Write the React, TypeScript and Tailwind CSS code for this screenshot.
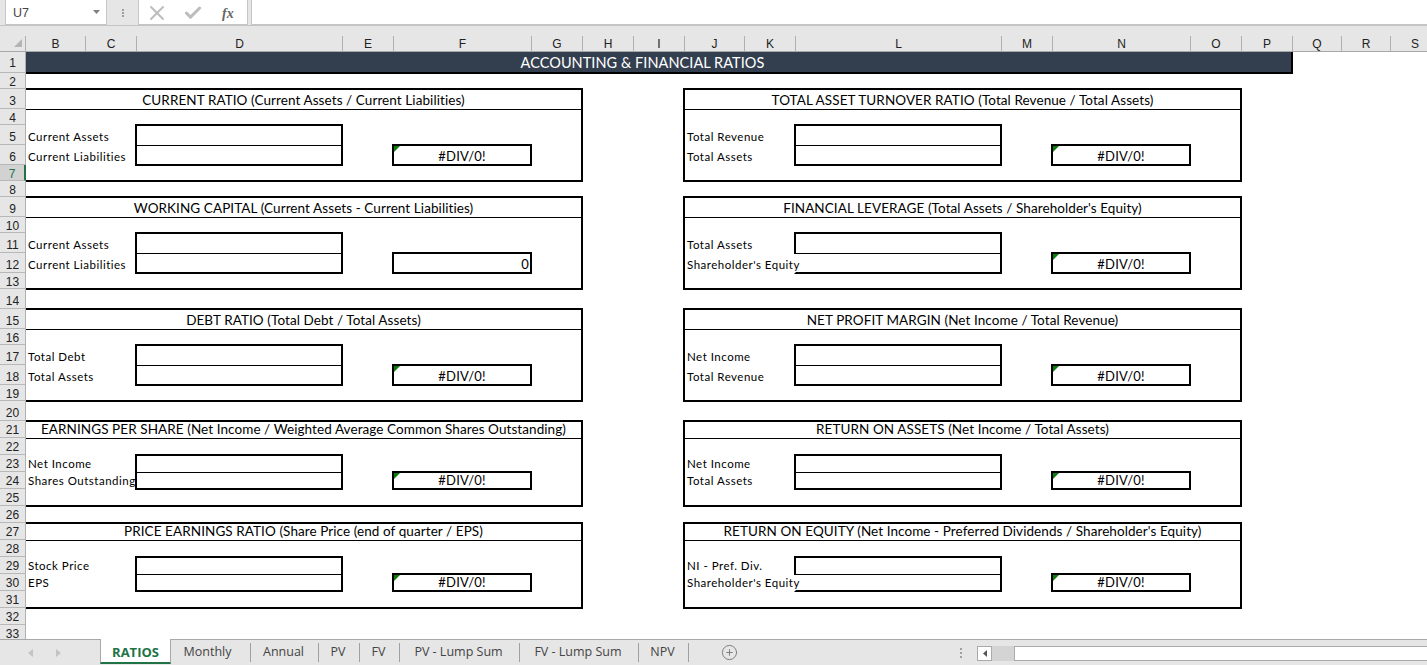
import React from "react";
import { X, Check, CirclePlus } from "lucide-react";

const columns = [
  { l: "B", w: "w-[60px]" }, { l: "C", w: "w-[51px]" }, { l: "D", w: "w-[206px]" }, { l: "E", w: "w-[51px]" },
  { l: "F", w: "w-[138px]" }, { l: "G", w: "w-[51px]" }, { l: "H", w: "w-[51px]" }, { l: "I", w: "w-[51px]" },
  { l: "J", w: "w-[60px]" }, { l: "K", w: "w-[51px]" }, { l: "L", w: "w-[206px]" }, { l: "M", w: "w-[51px]" },
  { l: "N", w: "w-[138px]" }, { l: "O", w: "w-[51px]" }, { l: "P", w: "w-[51px]" }, { l: "Q", w: "w-[49px]" },
  { l: "R", w: "w-[49px]" }, { l: "S", w: "w-[49px]" },
];

const rowHeights = [
  "h-[21px] pt-[2px]", "h-[16px] pt-[2px]", "h-[20px] pt-[4px]", "h-[16px] pt-[2px]", "h-[20px] pt-[4px]", "h-[20px] pt-[4px]", "h-[16px] pt-[2px]", "h-[16px] pt-[2px]", "h-[20px] pt-[4px]", "h-[16px] pt-[2px]", "h-[20px] pt-[4px]",
  "h-[20px] pt-[4px]", "h-[16px] pt-[2px]", "h-[20px] pt-[4px]", "h-[20px] pt-[4px]", "h-[16px] pt-[2px]", "h-[20px] pt-[4px]", "h-[20px] pt-[4px]", "h-[16px] pt-[2px]", "h-[20px] pt-[4px]", "h-[17px] pt-[1px]", "h-[17px] pt-[1px]",
  "h-[17px] pt-[1px]", "h-[17px] pt-[1px]", "h-[17px] pt-[1px]", "h-[17px] pt-[1px]", "h-[17px] pt-[1px]", "h-[17px] pt-[1px]", "h-[17px] pt-[1px]", "h-[17px] pt-[1px]", "h-[17px] pt-[1px]", "h-[17px] pt-[1px]", "h-[17px] pt-[1px]",
];

type Card = { title: string; a: string; b: string; value: string; top: string; small?: boolean; spill?: boolean };

const left: Card[] = [
  { title: "CURRENT RATIO (Current Assets / Current Liabilities)", a: "Current Assets", b: "Current Liabilities", value: "#DIV/0!", top: "mt-[14px]" },
  { title: "WORKING CAPITAL (Current Assets - Current Liabilities)", a: "Current Assets", b: "Current Liabilities", value: "0", top: "mt-[14px]" },
  { title: "DEBT RATIO (Total Debt / Total Assets)", a: "Total Debt", b: "Total Assets", value: "#DIV/0!", top: "mt-[18px]" },
  { title: "EARNINGS PER SHARE (Net Income / Weighted Average Common Shares Outstanding)", a: "Net Income", b: "Shares Outstanding", value: "#DIV/0!", top: "mt-[18px]", small: true },
  { title: "PRICE EARNINGS RATIO (Share Price (end of quarter / EPS)", a: "Stock Price", b: "EPS", value: "#DIV/0!", top: "mt-[15px]", small: true },
];

const right: Card[] = [
  { title: "TOTAL ASSET TURNOVER RATIO (Total Revenue / Total Assets)", a: "Total Revenue", b: "Total Assets", value: "#DIV/0!", top: "mt-[14px]" },
  { title: "FINANCIAL LEVERAGE (Total Assets / Shareholder's Equity)", a: "Total Assets", b: "Shareholder's Equity", value: "#DIV/0!", top: "mt-[14px]", spill: true },
  { title: "NET PROFIT MARGIN (Net Income / Total Revenue)", a: "Net Income", b: "Total Revenue", value: "#DIV/0!", top: "mt-[18px]" },
  { title: "RETURN ON ASSETS (Net Income / Total Assets)", a: "Net Income", b: "Total Assets", value: "#DIV/0!", top: "mt-[18px]", small: true },
  { title: "RETURN ON EQUITY (Net Income - Preferred Dividends / Shareholder's Equity)", a: "NI - Pref. Div.", b: "Shareholder's Equity", value: "#DIV/0!", top: "mt-[15px]", small: true, spill: true },
];

const tabs = [
  { t: "Monthly", w: "w-[80px]", p: "pr-[6px]" }, { t: "Annual", w: "w-[68px]", p: "pr-[2px]" }, { t: "PV", w: "w-[41px]", p: "pr-[2px]" }, { t: "FV", w: "w-[40px]", p: "pr-[2px]" },
  { t: "PV - Lump Sum", w: "w-[120px]", p: "pr-[2px]" }, { t: "FV - Lump Sum", w: "w-[119px]", p: "pr-[2px]" }, { t: "NPV", w: "w-[50px]", p: "pr-[2px]" },
];

function RatioCard({ card, noLeft }: { card: Card; noLeft?: boolean }) {
  const s = card.small;
  return (
    <div className={`${card.top} ${s ? "h-[87px]" : "h-[94px]"} w-full border-2 border-black ${noLeft ? "border-l-0" : ""} bg-white flex flex-col`}>
      <div className={`${s ? "h-[17px] pb-[1px]" : "h-[20px] pt-[1px]"} shrink-0 border-b border-black flex items-center justify-center text-[13.5px] tracking-[0.08px] text-black whitespace-nowrap`}>
        {card.title}
      </div>
      <div className={`flex items-start pl-[2px] ${s ? "pt-[15px]" : "pt-[14px]"}`}>
        <div className="w-[107px] shrink-0 relative z-10 text-[11.5px] tracking-[0.5px] text-black whitespace-nowrap">
          <div className={`${s ? "h-[19px] pb-[1px]" : "h-[21px]"} flex items-end`}>{card.a}</div>
          <div className={`${s ? "h-[17px] pb-[1px]" : "h-[21px] pb-[1px]"} flex items-end`}>{card.b}</div>
        </div>
        <div className="w-[208px] shrink-0 flex flex-col">
          <div className={`${s ? "h-[19px]" : "h-[22px]"} border-2 border-b border-black`} />
          <div className={`${s ? "h-[17px]" : "h-[20px]"} border-2 border-t-0 border-black ${card.spill ? "border-l-transparent" : ""}`} />
        </div>
        <div className={`ml-[49px] ${s ? "mt-[17px] h-[19px]" : "mt-[20px] h-[22px] pt-[3px]"} w-[140px] shrink-0 border-2 border-black relative flex items-center ${card.value === "0" ? "justify-end pr-[1px]" : "justify-center"} text-[13px] tracking-[0.2px] text-black`}>
          {card.value !== "0" && (
            <svg className="absolute left-0 top-0" width="6" height="6" viewBox="0 0 6 6"><polygon points="0,0 6,0 0,6" fill="#0a7d0a" /></svg>
          )}
          {card.value}
        </div>
      </div>
    </div>
  );
}

export default function App() {
  return (
    <div className="w-[1427px] h-[665px] overflow-hidden bg-white flex flex-col font-['Lato',sans-serif]">
      {/* formula bar */}
      <div className="h-[26px] shrink-0 bg-[#e6e6e6] border-b border-[#c4c4c4] flex pl-[5px] font-['Liberation_Sans',sans-serif]">
        <div className="w-[102px] h-[25px] bg-white border border-[#c6c6c6] border-t-0 flex items-center justify-between pl-[7px] pr-[6px] text-[12.5px] text-[#444]">
          <span className="pt-[2px]">U7</span>
          <svg width="7" height="4" viewBox="0 0 7 4"><polygon points="0,0 7,0 3.5,4" fill="#808080" /></svg>
        </div>
        <div className="w-[31px] pt-[1px] flex flex-col items-center justify-center gap-[1px]">
          <span className="w-[2px] h-[2px] bg-[#a0a0a0]" />
          <span className="w-[2px] h-[2px] bg-[#a0a0a0]" />
          <span className="w-[2px] h-[2px] bg-[#a0a0a0]" />
        </div>
        <div className="w-[110px] h-[25px] bg-white border border-[#c6c6c6] border-t-0 flex items-center pl-[6px] text-[#bdbdbd]">
          <X size={24} strokeWidth={2} className="shrink-0 mt-[1px]" />
          <Check size={20} strokeWidth={3.6} className="ml-[14px] shrink-0 mt-[1px]" />
          <span className="ml-[19px] pt-[2px] font-['Liberation_Serif',serif] italic font-bold text-[14px] text-[#666]">fx</span>
        </div>
        <div className="ml-[3px] flex-1 h-[25px] bg-white border-l border-b border-[#c6c6c6]" />
      </div>

      {/* column headers */}
      <div className="h-[26px] shrink-0 bg-[#e6e6e6] border-b border-[#a8a8a8] flex font-['Liberation_Sans',sans-serif] text-[12px] text-[#222]">
        <div className="w-[26px] shrink-0 border-r border-[#b0b0b0] flex items-end justify-end pr-[3px] pb-[4px] mt-[10px]">
          <svg width="8" height="8" viewBox="0 0 8 8"><polygon points="8,0 8,8 0,8" fill="#b4b4b4" /></svg>
        </div>
        {columns.map((c) => (
          <div key={c.l} className={`${c.w} shrink-0 mt-[10px] border-r border-[#b0b0b0] flex items-center justify-center`}>{c.l}</div>
        ))}
      </div>

      {/* sheet */}
      <div className="flex-1 min-h-0 flex overflow-hidden">
        <div className="w-[26px] shrink-0 flex flex-col font-['Liberation_Sans',sans-serif] text-[12px] text-[#222]">
          {rowHeights.map((h, i) => (
            <div
              key={i}
              className={`${h} shrink-0 flex items-center justify-center border-b border-[#b8b8b8] ${i === 6 ? "bg-[#d2d2d2] border-r-2 border-r-[#217346] text-[#217346]" : "bg-[#e6e6e6] border-r border-r-[#b0b0b0]"}`}
            >
              {i + 1}
            </div>
          ))}
        </div>
        <div className="flex-1 min-w-0 flex flex-col">
          <div className="h-[22px] w-[1267px] shrink-0 bg-[#333f4f] border-b-2 border-r-2 border-black flex items-center justify-center pr-[32px] pt-[1px] text-[14.5px] text-white tracking-[0.05px]">
            ACCOUNTING &amp; FINANCIAL RATIOS
          </div>
          <div className="flex">
            <div className="w-[557px] shrink-0 flex flex-col">
              {left.map((c) => <RatioCard key={c.title} card={c} noLeft />)}
            </div>
            <div className="ml-[100px] w-[559px] shrink-0 flex flex-col">
              {right.map((c) => <RatioCard key={c.title} card={c} />)}
            </div>
          </div>
        </div>
      </div>

      {/* tabs */}
      <div className="h-[26px] shrink-0 bg-[#e6e6e6] border-t border-[#a8a8a8] flex items-start font-['Open_Sans',sans-serif] text-[12.5px] text-[#444] relative">
        <div className="w-[100px] h-full flex items-center pl-[28px] gap-[23px]">
          <svg width="5" height="8" viewBox="0 0 5 8"><polygon points="5,0 5,8 0,4" fill="#c4c4c4" /></svg>
          <svg width="5" height="8" viewBox="0 0 5 8"><polygon points="0,0 0,8 5,4" fill="#c4c4c4" /></svg>
        </div>
        <div className="w-[71px] h-[25px] -mt-px pt-[4px] bg-white border-x border-[#a8a8a8] border-b-2 border-b-[#217346] flex items-center justify-center font-bold text-[#217346] text-[13px]">
          RATIOS
        </div>
        {tabs.map((t) => (
          <div key={t.t} className={`${t.w} ${t.p} h-[19px] mt-[3px] border-r border-[#a0a0a0] flex items-center justify-center`}>{t.t}</div>
        ))}
        <CirclePlus size={17} strokeWidth={1.3} className="ml-[32px] mt-[4px] text-[#777]" />
        <div className="ml-[222px] mt-[8px] w-[2px] flex flex-col gap-[2px]">
          <span className="h-[2px] bg-[#a0a0a0]" />
          <span className="h-[2px] bg-[#a0a0a0]" />
          <span className="h-[2px] bg-[#a0a0a0]" />
        </div>
        <div className="ml-[15px] mt-[6px] flex-1 h-[15px] flex bg-[#d4d4d4]">
          <div className="w-[15px] h-full bg-white border border-[#aaa] flex items-center justify-center">
            <svg width="4" height="7" viewBox="0 0 4 7"><polygon points="4,0 4,7 0,3.5" fill="#555" /></svg>
          </div>
          <div className="ml-[22px] flex-1 h-full bg-white border-y border-l border-[#aaa]" />
        </div>
      </div>
    </div>
  );
}
